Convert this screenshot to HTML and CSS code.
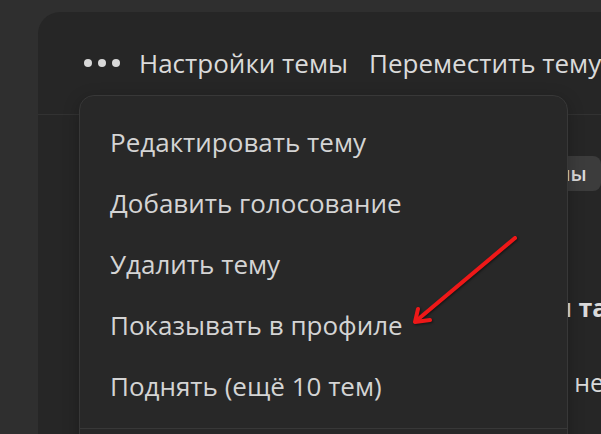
FILE: index.html
```html
<!DOCTYPE html>
<html lang="ru">
<head>
<meta charset="utf-8">
<link rel="stylesheet" href="styles.css">
</head>
<body>
<div class="panel">
  <div class="header">
    <span class="dots"><i></i><i></i><i></i></span>
    <span class="tab">Настройки темы</span>
    <span class="tab tab-move">Переместить тему</span>
  </div>
  <div class="content">
    <div class="chip">Темы</div>
    <div class="row row-bold">ии та</div>
    <div class="row">ии не</div>
  </div>
  <div class="menu">
    <div class="item">Редактировать тему</div>
    <div class="item">Добавить голосование</div>
    <div class="item">Удалить тему</div>
    <div class="item">Показывать в профиле</div>
    <div class="item">Поднять (ещё 10 тем)</div>
    <div class="sep"></div>
  </div>
  <svg class="arrow" width="601" height="434" viewBox="0 0 601 434">
    <g fill="none" stroke="#ee1818" stroke-width="4" stroke-linecap="round" stroke-linejoin="round">
      <path d="M515 238 L416 321"/>
      <path d="M418 309 L415 322 L430 320"/>
    </g>
  </svg>
</div>
</body>
</html>
```
FILE: styles.css
```css
html, body {
  margin: 0;
  padding: 0;
  background: #2f2f2f;
  overflow: hidden;
  height: 434px;
}
body {
  padding: 12px 0 0 38px;
  box-sizing: border-box;
  font-family: "Open Sans", "Noto Sans", sans-serif;
}
.panel {
  position: relative;
  height: 422px;
  width: 563px;
  overflow: hidden;
  background: #262626;
  border-top-left-radius: 22px;
}
.header {
  display: flex;
  align-items: center;
  height: 103px;
  box-sizing: border-box;
  border-bottom: 1px solid #323232;
  padding: 0 0 0 46px;
  white-space: nowrap;
}
.dots {
  display: flex;
  gap: 6px;
  margin-right: 19px;
}
.dots i {
  display: block;
  width: 8px;
  height: 8px;
  border-radius: 50%;
  background: #d8d8d8;
}
.tab {
  color: #dadada;
  font-size: 26px;
}
.tab-move {
  margin-left: 21px;
}
.content {
  padding: 41px 0 0 480px;
  white-space: nowrap;
}
.chip {
  display: inline-block;
  background: #3c3c3c;
  color: #dadada;
  font-weight: 600;
  font-size: 20px;
  line-height: 35px;
  padding: 0 14px;
  border-radius: 8px;
}
.row {
  color: #dadada;
  font-size: 25px;
  margin-left: 18px;
  line-height: 30px;
}
.row-bold {
  font-weight: 700;
  margin-top: 101px;
}
.row + .row {
  margin-top: 45px;
}
.menu {
  position: absolute;
  left: 41px;
  top: 83px;
  width: 489px;
  height: 400px;
  box-sizing: border-box;
  background: #282828;
  border: 1px solid #383838;
  border-radius: 15px;
  padding: 16px 0 0 0;
  box-shadow: 0 4px 16px rgba(0,0,0,0.25);
}
.item {
  color: #d4d4d4;
  font-size: 26px;
  height: 61px;
  line-height: 61px;
  padding-left: 30px;
  white-space: nowrap;
}
.sep {
  height: 1px;
  background: #383838;
  margin-top: 11px;
}
.arrow {
  position: absolute;
  left: -38px;
  top: -12px;
  filter: drop-shadow(1px 1px 1px rgba(0,0,0,0.5));
}
```
